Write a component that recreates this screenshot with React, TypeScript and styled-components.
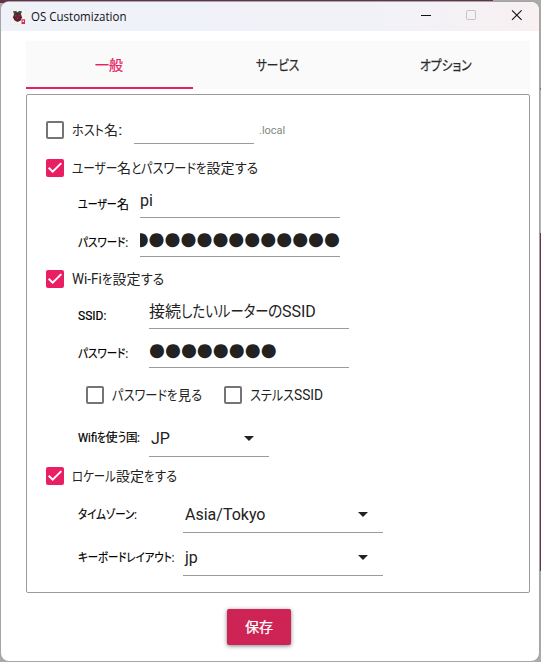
import React, { useLayoutEffect, useRef, useState } from "react";
import styled, { createGlobalStyle } from "styled-components";

const PINK = "#e91e63";
const LINE = "#9b9b9b";

const GlobalStyle = createGlobalStyle`
  * { box-sizing: border-box; }
  html, body { margin: 0; padding: 0; }
  body { background: #8d8d90; font-family: Roboto, "Noto Sans CJK JP", sans-serif; color: #222; overflow: hidden; }
`;

const Desktop = styled.div`
  width: 541px;
  height: 662px;
  padding: 2px 2px 2px 1px;
  background: linear-gradient(90deg, #643347 0 493px, #aaa 493px) top / 100% 3px no-repeat,
    linear-gradient(#aaa 0 88px, #777 88px 90px, #b5b5b5 90px 233px, #643347 233px 571px, #aaa 571px);
`;

const Window = styled.main`
  width: 538px;
  height: 659px;
  overflow: hidden;
  border-radius: 8px;
  background: #fff;
  display: flex;
  flex-direction: column;
  box-shadow: 0 0 0 1px #a5a5a7;
`;

const TitleBar = styled.header`
  height: 29px;
  flex: none;
  display: flex;
  align-items: center;
  padding-left: 9px;
  background: linear-gradient(90deg, #eff2f9 0%, #f1f2f8 70%, #f8f0f1 100%);
`;

const AppTitle = styled.h1`
  flex: 1;
  margin: 0 0 0 5px;
  font: 400 12px/28px "Open Sans", sans-serif;
  color: #111;
`;

const WindowControls = styled.div`
  display: flex;
  align-items: center;
  svg { display: block; width: 46px; height: 29px; }
`;

const Tabs = styled.nav`
  display: grid;
  grid-template-columns: 167px 170px 167px;
  height: 48px;
  flex: none;
  margin: 10px 9px 0 25px;
  background: #fafafa;
`;

const Tab = styled.div<{ $active?: boolean }>`
  display: flex;
  align-items: center;
  justify-content: center;
  padding: 0 1px 2px 0;
  font-size: 14px;
  -webkit-text-stroke: 0.25px;
  color: ${(p) => (p.$active ? PINK : "#2a2a2a")};
  box-shadow: ${(p) => (p.$active ? `inset 0 -2px ${PINK}` : "none")};
`;

const Panel = styled.section`
  flex: none;
  height: 499px;
  margin: 5px 9px 0 25px;
  padding: 16px 0 0 19px;
  border: 1px solid ${LINE};
  border-radius: 2px;
`;

const CheckRow = styled.div<{ $height: number; $indent?: number }>`
  display: flex;
  align-items: center;
  height: ${(p) => p.$height}px;
  padding-left: ${(p) => p.$indent ?? 0}px;
`;

const CheckItem = styled.div<{ $width?: number }>`
  display: flex;
  align-items: center;
  gap: 8px;
  width: ${(p) => (p.$width ? `${p.$width}px` : "auto")};
  font-size: 14px;
  line-height: 18px;
`;

const Box = styled.span<{ $checked?: boolean }>`
  display: flex;
  flex: none;
  width: 18px;
  height: 18px;
  border-radius: 2px;
  border: ${(p) => (p.$checked ? "none" : "2px solid #757575")};
  background: ${(p) => (p.$checked ? PINK : "#fff")};
`;

const FieldRow = styled.div<{ $height: number; $labelWidth: number }>`
  display: grid;
  grid-template-columns: ${(p) => p.$labelWidth}px auto;
  justify-content: start;
  align-items: end;
  height: ${(p) => p.$height}px;
  padding-left: 32px;
`;

const Label = styled.label<{ $lift: number }>`
  display: flex;
  font-size: 12px;
  -webkit-text-stroke: 0.2px;
  line-height: 16px;
  color: #000;
  padding-bottom: ${(p) => p.$lift}px;
`;

const Field = styled.div<{ $width: number; $lift?: number; $inset?: number; $end?: boolean }>`
  display: flex;
  justify-content: ${(p) => (p.$end ? "flex-end" : "flex-start")};
  align-items: center;
  overflow: hidden;
  width: ${(p) => p.$width}px;
  padding: 0 0 ${(p) => p.$lift ?? 7}px ${(p) => p.$inset ?? 0}px;
  border-bottom: 1px solid ${LINE};
  font-size: 16px;
  line-height: 20px;
`;

const HostField = styled.div`
  width: 120px;
  height: 28px;
  margin-left: 12px;
  border-bottom: 1px solid ${LINE};
`;

const Suffix = styled.span`
  margin-left: 5px;
  font-size: 11px;
  color: #858585;
`;

const Dots = styled.span`
  flex: none;
  font: 18.3px/20px "DejaVu Sans", sans-serif;
`;

const Arrow = styled.svg`
  display: block;
  width: 10px;
  height: 5px;
  margin: 0 15px 1px auto;
`;

const Footer = styled.footer`
  display: flex;
  justify-content: center;
  padding: 16px 22px 0 0;
`;

const SaveButton = styled.button`
  display: flex;
  align-items: center;
  justify-content: center;
  width: 64px;
  height: 36px;
  padding: 0;
  border: 0;
  border-radius: 2px;
  background: #cd2355;
  color: #fff;
  font: 400 14px/20px Roboto, "Noto Sans CJK JP", sans-serif;
  -webkit-text-stroke: 0.25px;
  box-shadow: 0 1px 4px rgba(0, 0, 0, 0.5);
`;

const Slot = styled.span`
  display: inline-block;
  flex: none;
  white-space: pre;
`;

const Glyphs = styled.span`
  display: inline-block;
  transform-origin: 0 50%;
  font-feature-settings: "palt";
`;

const Line = styled.span`
  display: inline-flex;
`;

type Run = [string, number];

/* Condenses or widens a run of characters to the given advance. */
function FittedRun({ text, width }: { text: string; width: number }) {
  const ref = useRef<HTMLSpanElement>(null);
  const [scale, setScale] = useState(1);
  useLayoutEffect(() => {
    if (ref.current) setScale(width / ref.current.offsetWidth);
  }, [text, width]);
  return (
    <Slot style={{ width }}>
      <Glyphs ref={ref} style={{ transform: `scaleX(${scale})` }}>{text}</Glyphs>
    </Slot>
  );
}

function Fitted({ runs }: { runs: Run[] }) {
  return <Line>{runs.map(([t, w], i) => <FittedRun key={i} text={t} width={w} />)}</Line>;
}

function Check({ checked, runs, width }: { checked?: boolean; runs: Run[]; width?: number }) {
  return (
    <CheckItem $width={width}>
      <Box $checked={checked}>
        {checked && (
          <svg width="18" height="18" viewBox="0 0 18 18" fill="none">
            <path d="M2.7 8.7 6.7 12.7 15.3 4.1" stroke="#fff" strokeWidth="2" />
          </svg>
        )}
      </Box>
      <Fitted runs={runs} />
    </CheckItem>
  );
}

const DropArrow = () => (
  <Arrow viewBox="0 0 10 5"><path d="M0 0h10L5 5z" fill="#222" /></Arrow>
);

const AppIcon = () => (
  <svg width="16" height="16" viewBox="0 0 16 16">
    <rect x=".2" y=".2" width="15.6" height="15.6" rx="2" fill="#f5f3f2" stroke="#e4e1e2" strokeWidth=".4" />
    <path d="M3 2.2 6.2 2l1.3 1.2L9 2l3 .3-1 2.7-3.5.8L4 5z" fill="#30533f" />
    <path d="M4 5.2 7.5 4 11 5.2l1 3-1.3 3.2L7.5 13l-3.2-1.7L3 8.2z" fill="#5d1f32" />
    <path d="M5 6h1.5v1.5H5zM8.3 6h1.5v1.5H8.3zM6.7 8.4h1.6V10H6.7z" fill="#a52a4a" />
    <path d="M11.5 10.3H15V15h-3.5z" fill="#cf3157" />
    <path d="M12.6 11.5h1.3V13h-1.3z" fill="#fff" />
  </svg>
);

export default function App() {
  return (
    <Desktop>
      <GlobalStyle />
      <Window>
        <TitleBar>
          <AppIcon />
          <AppTitle><Fitted runs={[["OS Customization", 95]]} /></AppTitle>
          <WindowControls>
            <svg viewBox="0 0 46 29"><path d="M20 13.5h10" stroke="#111" /></svg>
            <svg viewBox="0 0 46 29"><rect x="19.5" y="8.5" width="9" height="9" rx="1" fill="none" stroke="#c3c2c6" /></svg>
            <svg viewBox="0 0 46 29"><path d="m19 8.3 9.6 9.6m0-9.6L19 17.9" stroke="#111" strokeWidth="1.1" /></svg>
          </WindowControls>
        </TitleBar>
        <Tabs>
          <Tab $active><Fitted runs={[["一般", 28]]} /></Tab>
          <Tab><Fitted runs={[["サービス", 43]]} /></Tab>
          <Tab><Fitted runs={[["オプション", 52]]} /></Tab>
        </Tabs>
        <Panel>
          <CheckRow $height={38}>
            <Check runs={[["ホスト", 32], ["名", 14], [":", 4]]} />
            <HostField />
            <Suffix><Fitted runs={[[".local", 26]]} /></Suffix>
          </CheckRow>
          <CheckRow $height={38}>
            <Check checked runs={[["ユーザー", 45], ["名", 14], ["と", 10], ["パスワード", 55], ["を", 10.5], ["設定", 28], ["する", 23]]} />
          </CheckRow>
          <FieldRow $height={31} $labelWidth={62}>
            <Label $lift={5}><Fitted runs={[["ユーザー", 39], ["名", 12]]} /></Label>
            <Field $width={200} $lift={6}>pi</Field>
          </FieldRow>
          <FieldRow $height={39} $labelWidth={62}>
            <Label $lift={6}><Fitted runs={[["パスワード:", 50]]} /></Label>
            <Field $width={200} $lift={7} $end><Dots>●●●●●●●●●●●●●</Dots></Field>
          </FieldRow>
          <CheckRow $height={44}>
            <Check checked runs={[["Wi-Fi", 30], ["を", 10.5], ["設定", 28], ["する", 23]]} />
          </CheckRow>
          <FieldRow $height={28} $labelWidth={71}>
            <Label $lift={5}><Fitted runs={[["SSID:", 28]]} /></Label>
            <Field $width={200} $lift={6}>
              <Fitted runs={[["接続", 32], ["したい", 37], ["ルーター", 50], ["の", 14], ["SSID", 34]]} />
            </Field>
          </FieldRow>
          <FieldRow $height={39} $labelWidth={71}>
            <Label $lift={6}><Fitted runs={[["パスワード:", 50]]} /></Label>
            <Field $width={200} $lift={7}><Dots>●●●●●●●●</Dots></Field>
          </FieldRow>
          <CheckRow $height={54} $indent={40}>
            <Check width={138} runs={[["パスワード", 55], ["を", 10.5], ["見", 13], ["る", 11.5]]} />
            <Check runs={[["ステルス", 44], ["SSID", 29.5]]} />
          </CheckRow>
          <FieldRow $height={35} $labelWidth={71}>
            <Label $lift={11}>
              <Fitted runs={[["Wifi", 19], ["を", 8.5], ["使", 12], ["う", 8], ["国", 11.5], [":", 3]]} />
            </Label>
            <Field $width={120} $inset={2}><Fitted runs={[["JP", 19]]} /><DropArrow /></Field>
          </FieldRow>
          <CheckRow $height={38}>
            <Check checked runs={[["ロケール", 44], ["設定", 28], ["を", 10.5], ["する", 22]]} />
          </CheckRow>
          <FieldRow $height={38} $labelWidth={105}>
            <Label $lift={10}><Fitted runs={[["タイムゾーン:", 59]]} /></Label>
            <Field $width={200} $inset={2}><Fitted runs={[["Asia/Tokyo", 80]]} /><DropArrow /></Field>
          </FieldRow>
          <FieldRow $height={43} $labelWidth={105}>
            <Label $lift={10}><Fitted runs={[["キーボードレイアウト:", 96]]} /></Label>
            <Field $width={200} $inset={2}>jp<DropArrow /></Field>
          </FieldRow>
        </Panel>
        <Footer><SaveButton><Fitted runs={[["保存", 28]]} /></SaveButton></Footer>
      </Window>
    </Desktop>
  );
}
